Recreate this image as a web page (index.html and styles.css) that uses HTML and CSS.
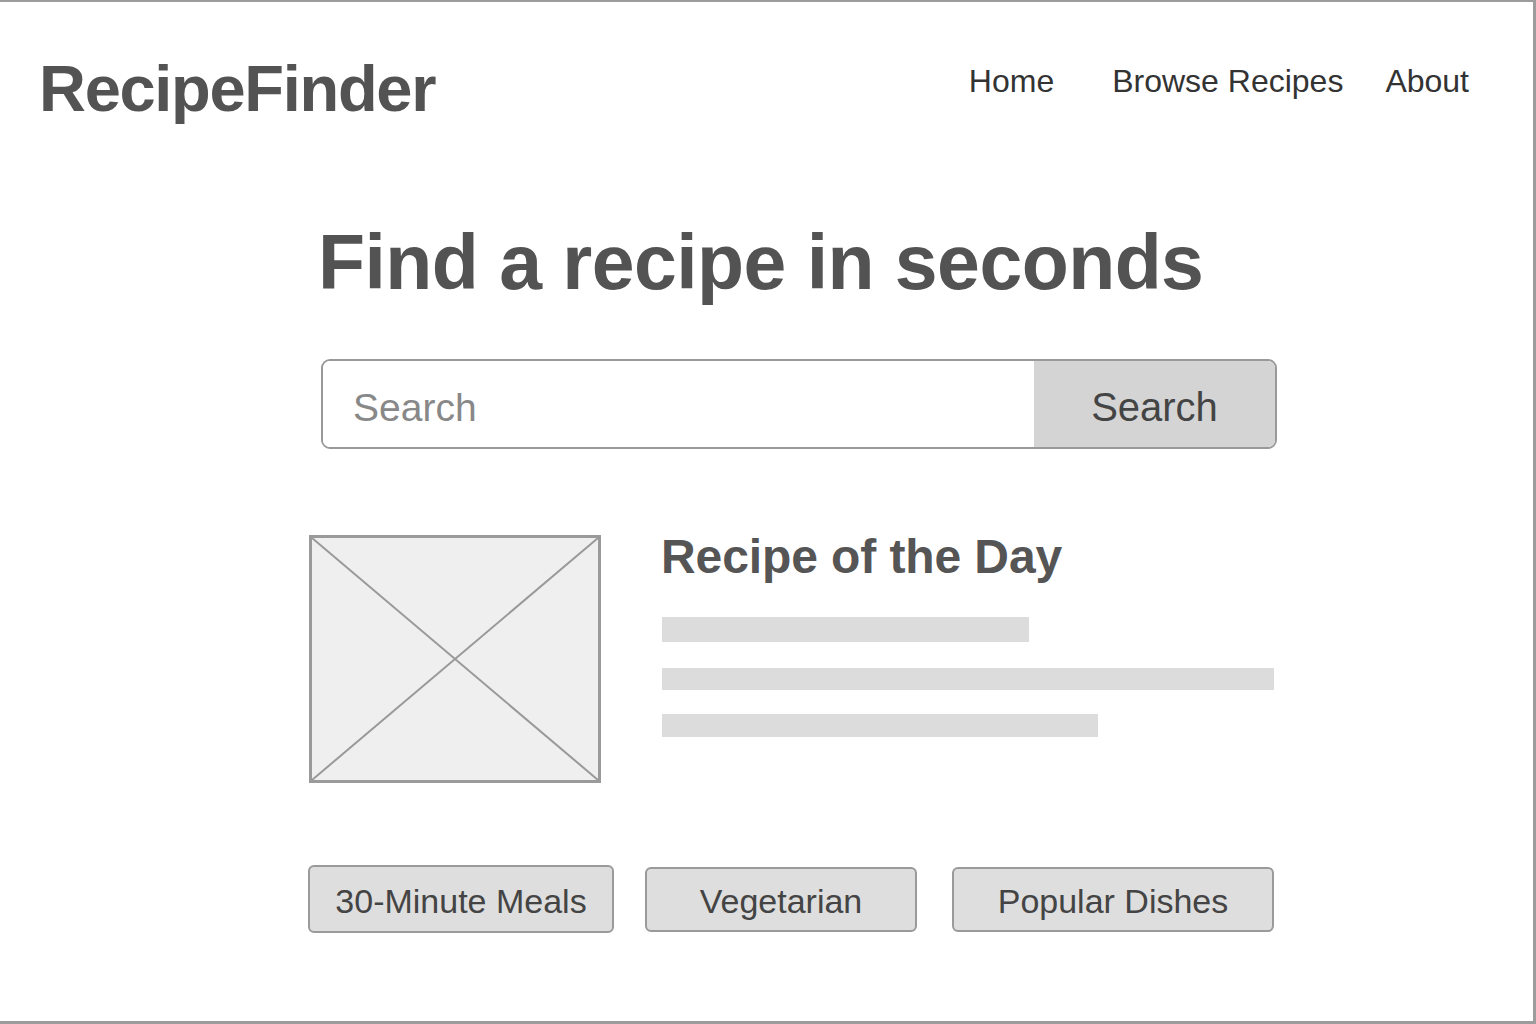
FILE: index.html
```html
<!DOCTYPE html>
<html lang="en">
<head>
<meta charset="utf-8">
<title>RecipeFinder</title>
<link rel="stylesheet" href="styles.css">
</head>
<body>
<div class="page">
  <header class="header">
    <div class="logo">RecipeFinder</div>
    <nav class="nav">
      <a class="nav-link" href="#">Home</a>
      <a class="nav-link nav-browse" href="#">Browse Recipes</a>
      <a class="nav-link nav-about" href="#">About</a>
    </nav>
  </header>
  <main class="main">
    <h1 class="hero-title">Find a recipe in seconds</h1>
    <form class="search" onsubmit="return false">
      <input class="search-input" type="text" placeholder="Search">
      <button class="search-btn" type="button">Search</button>
    </form>
    <section class="feature">
      <div class="feature-img">
        <svg class="x-svg" viewBox="0 0 100 100" preserveAspectRatio="none">
          <line x1="0" y1="0" x2="100" y2="100" vector-effect="non-scaling-stroke"/>
          <line x1="100" y1="0" x2="0" y2="100" vector-effect="non-scaling-stroke"/>
        </svg>
      </div>
      <div class="feature-body">
        <h2 class="feature-title">Recipe of the Day</h2>
        <div class="bar bar-1"></div>
        <div class="bar bar-2"></div>
        <div class="bar bar-3"></div>
      </div>
    </section>
    <div class="tags">
      <button class="tag tag-1" type="button">30-Minute Meals</button>
      <button class="tag tag-2" type="button">Vegetarian</button>
      <button class="tag tag-3" type="button">Popular Dishes</button>
    </div>
  </main>
</div>
</body>
</html>
```

FILE: styles.css
```css
* { box-sizing: border-box; }
html, body { margin: 0; padding: 0; background: #fff; }
body { font-family: "Liberation Sans", Arial, sans-serif; color: #333; }

.page {
  width: 1536px;
  height: 1024px;
  border-top: 2px solid #9c9c9c;
  border-right: 3px solid #9c9c9c;
  border-bottom: 3px solid #9c9c9c;
  overflow: hidden;
}

.header {
  display: flex;
  justify-content: space-between;
  align-items: flex-start;
  padding: 54px 64px 0 39px;
}
.logo {
  font-size: 65px;
  line-height: 65px;
  font-weight: 700;
  letter-spacing: -1.3px;
  color: #535353;
}
.nav {
  display: flex;
  margin-top: 9px;
}
.nav-link {
  font-size: 32px;
  line-height: 32px;
  color: #333;
  text-decoration: none;
}
.nav-browse { margin-left: 58px; }
.nav-about { margin-left: 42px; }

.main {
  padding-left: 309px;
  width: 1277px;
}
.hero-title {
  margin: 103px 0 0 9px;
  font-size: 77px;
  line-height: 77px;
  font-weight: 700;
  letter-spacing: -0.55px;
  color: #535353;
}

.search {
  display: flex;
  margin: 58px 0 0 12px;
  width: 956px;
  height: 90px;
  border: 2px solid #999;
  border-radius: 9px;
  overflow: hidden;
}
.search-input {
  flex: 1;
  border: 0;
  outline: none;
  padding: 8px 0 0 30px;
  font-family: "Liberation Sans", Arial, sans-serif;
  font-size: 39px;
  color: #555;
  background: #fff;
}
.search-input::placeholder { color: #888; }
.search-btn {
  width: 241px;
  border: 0;
  background: #d4d4d4;
  font-family: "Liberation Sans", Arial, sans-serif;
  font-size: 40px;
  color: #444;
  padding: 6px 0 0 0;
}

.feature {
  display: flex;
  align-items: flex-start;
  margin-top: 86px;
}
.feature-img {
  width: 292px;
  height: 248px;
  border: 3px solid #9a9a9a;
  background: #efefef;
  flex-shrink: 0;
}
.x-svg {
  display: block;
  width: 100%;
  height: 100%;
}
.x-svg line {
  stroke: #999;
  stroke-width: 2;
}
.feature-body {
  margin-left: 61px;
  display: flex;
  flex-direction: column;
}
.feature-title {
  margin: -2px 0 0 -1px;
  font-size: 48px;
  line-height: 48px;
  font-weight: 700;
  letter-spacing: -0.1px;
  color: #555;
}
.bar { background: #dcdcdc; }
.bar-1 { width: 367px; height: 25px; margin-top: 36px; }
.bar-2 { width: 612px; height: 22px; margin-top: 26px; }
.bar-3 { width: 436px; height: 23px; margin-top: 24px; }

.tags {
  display: flex;
  align-items: center;
  margin: 82px 0 0 -1px;
}
.tag {
  height: 65px;
  border: 2px solid #9a9a9a;
  border-radius: 6px;
  background: #dedede;
  font-family: "Liberation Sans", Arial, sans-serif;
  font-size: 34px;
  color: #444;
  padding: 4px 0 0 0;
}
.tag-1 { width: 306px; height: 68px; }
.tag-2 { width: 272px; margin-left: 31px; }
.tag-3 { width: 322px; margin-left: 35px; }
```
